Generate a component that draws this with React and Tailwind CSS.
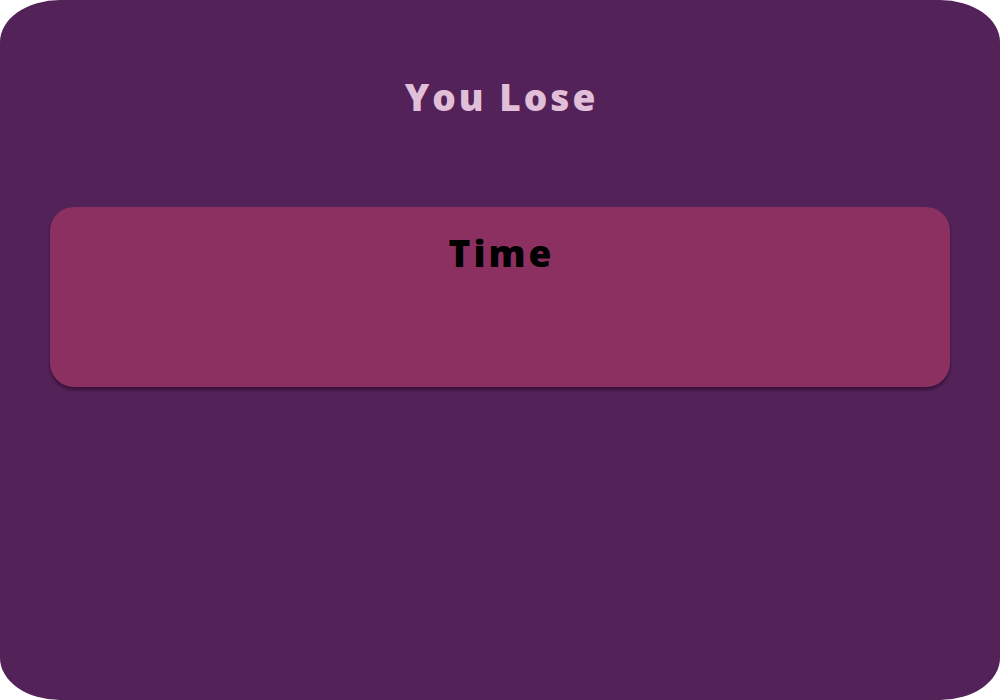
import React from "react";

export default function App() {
  return (
    <div className="w-[1000px] h-[700px] bg-white">
      <div
        className="w-full h-full rounded-[6%] bg-[#522258] flex flex-col items-center px-[50px]"
        style={{ fontFamily: "'Open Sans', 'Liberation Sans', sans-serif" }}
      >
        <h1 className="mt-[70px] h-[54px] pl-[3px] text-[37px] leading-[54px] tracking-[3px] font-extrabold text-[#E2BFD9]">
          You Lose
        </h1>
        {/* result card */}
        <div className="mt-[83px] w-full h-[180px] rounded-3xl bg-[#8C3061] shadow-[0_3px_3px_rgba(40,10,40,0.6)] flex flex-col items-center pt-[19px]">
          <h2 className="pl-[3px] text-[37px] leading-[54px] tracking-[3px] font-extrabold text-black">Time</h2>
        </div>
      </div>
    </div>
  );
}
